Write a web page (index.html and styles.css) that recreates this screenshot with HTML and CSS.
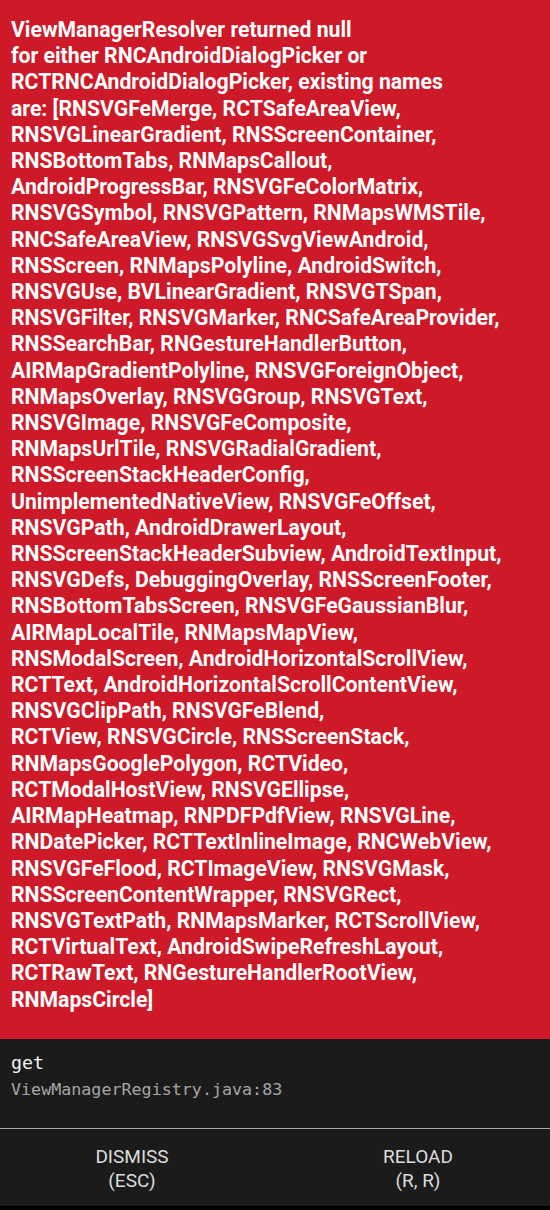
FILE: index.html
```html
<!DOCTYPE html>
<html>
<head>
<meta charset="utf-8">
<link rel="stylesheet" href="styles.css">
</head>
<body>
<div class="screen">
  <div class="redbox">
    <div class="message">ViewManagerResolver returned null<br>for either RNCAndroidDialogPicker or<br>RCTRNCAndroidDialogPicker, existing names<br>are: [RNSVGFeMerge, RCTSafeAreaView,<br>RNSVGLinearGradient, RNSScreenContainer,<br>RNSBottomTabs, RNMapsCallout,<br>AndroidProgressBar, RNSVGFeColorMatrix,<br>RNSVGSymbol, RNSVGPattern, RNMapsWMSTile,<br>RNCSafeAreaView, RNSVGSvgViewAndroid,<br>RNSScreen, RNMapsPolyline, AndroidSwitch,<br>RNSVGUse, BVLinearGradient, RNSVGTSpan,<br>RNSVGFilter, RNSVGMarker, RNCSafeAreaProvider,<br>RNSSearchBar, RNGestureHandlerButton,<br>AIRMapGradientPolyline, RNSVGForeignObject,<br>RNMapsOverlay, RNSVGGroup, RNSVGText,<br>RNSVGImage, RNSVGFeComposite,<br>RNMapsUrlTile, RNSVGRadialGradient,<br>RNSScreenStackHeaderConfig,<br>UnimplementedNativeView, RNSVGFeOffset,<br>RNSVGPath, AndroidDrawerLayout,<br>RNSScreenStackHeaderSubview, AndroidTextInput,<br>RNSVGDefs, DebuggingOverlay, RNSScreenFooter,<br>RNSBottomTabsScreen, RNSVGFeGaussianBlur,<br>AIRMapLocalTile, RNMapsMapView,<br>RNSModalScreen, AndroidHorizontalScrollView,<br>RCTText, AndroidHorizontalScrollContentView,<br>RNSVGClipPath, RNSVGFeBlend,<br>RCTView, RNSVGCircle, RNSScreenStack,<br>RNMapsGooglePolygon, RCTVideo,<br>RCTModalHostView, RNSVGEllipse,<br>AIRMapHeatmap, RNPDFPdfView, RNSVGLine,<br>RNDatePicker, RCTTextInlineImage, RNCWebView,<br>RNSVGFeFlood, RCTImageView, RNSVGMask,<br>RNSScreenContentWrapper, RNSVGRect,<br>RNSVGTextPath, RNMapsMarker, RCTScrollView,<br>RCTVirtualText, AndroidSwipeRefreshLayout,<br>RCTRawText, RNGestureHandlerRootView,<br>RNMapsCircle]</div>
  </div>
  <div class="stack">
    <div class="frame">
      <div class="method">get</div>
      <div class="file">ViewManagerRegistry.java:83</div>
    </div>
    <div class="frame">
      <div class="method">createViewUnsafe</div>
      <div class="file">SurfaceMountingManager.java:1086</div>
    </div>
  </div>
  <div class="buttons">
    <div class="button">DISMISS<br>(ESC)</div>
    <div class="button">RELOAD<br>(R, R)</div>
  </div>
  <div class="navbar"></div>
</div>
</body>
</html>
```
FILE: styles.css
```css
html, body {
  margin: 0;
  padding: 0;
  background: #000;
}
.screen {
  width: 550px;
  height: 1210px;
  display: flex;
  flex-direction: column;
  overflow: hidden;
}
.redbox {
  background: #ce1a28;
  padding: 17px 11px 26px 11px;
  flex: none;
}
.message {
  font-family: Roboto, "Noto Sans", sans-serif;
  font-weight: 700;
  font-size: 21.2px;
  line-height: 26.2px;
  color: #ffffff;
  white-space: nowrap;
}
.stack {
  flex: 1;
  min-height: 0;
  overflow: hidden;
  background: #1b1b1b;
  border-bottom: 1px solid #a8a8a8;
}
.frame {
  padding: 11px 11px 11px 11px;
  font-family: "DejaVu Sans Mono", monospace;
  white-space: nowrap;
}
.method {
  font-size: 18.3px;
  line-height: 26px;
  color: #f2f2f2;
}
.file {
  font-size: 16.7px;
  line-height: 26px;
  color: #a6a6a6;
}
.buttons {
  flex: none;
  height: 77px;
  box-sizing: border-box;
  padding-top: 2px;
  background: #1b1b1b;
  display: grid;
  grid-template-columns: 1fr 1fr;
  column-gap: 22px;
  align-items: center;
}
.button {
  text-align: center;
  font-family: Roboto, "Noto Sans", sans-serif;
  font-size: 19px;
  line-height: 23.3px;
  color: #dcdcdc;
}
.navbar {
  flex: none;
  height: 4px;
  background: #000;
}
```
